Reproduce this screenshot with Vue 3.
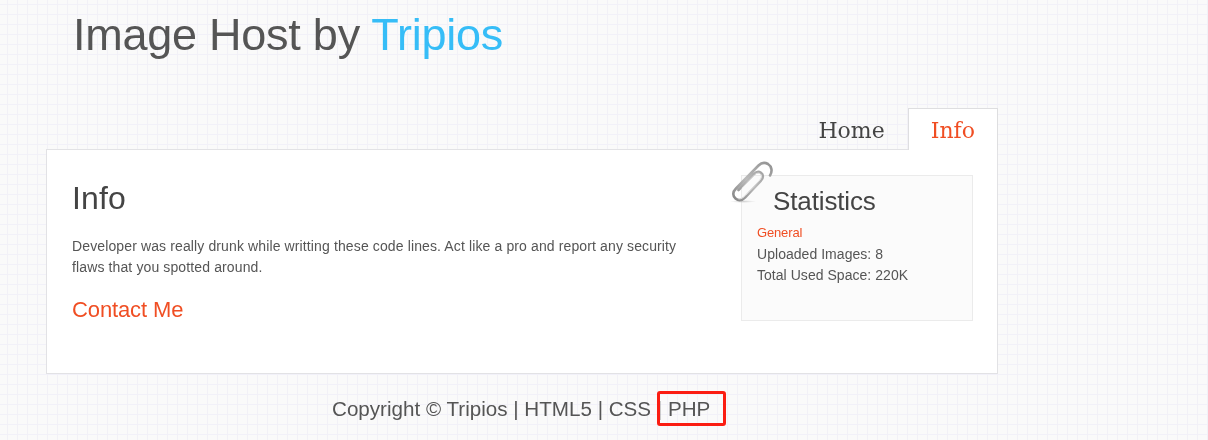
<script setup>
const tabs = [
  { label: 'Home', active: false },
  { label: 'Info', active: true },
]
const stats = ['Uploaded Images: 8', 'Total Used Space: 220K']
</script>

<template>
  <div class="page">
    <div class="wrap">
      <header>
        <h1>Image Host by <span>Tripios</span></h1>
        <nav>
          <a v-for="t in tabs" :key="t.label" class="tab" :class="{ active: t.active }">{{ t.label }}</a>
        </nav>
      </header>
      <main>
        <section class="content">
          <h2>Info</h2>
          <p>Developer was really drunk while writting these code lines. Act like a pro and report any security flaws that you spotted around.</p>
          <a class="contact">Contact Me</a>
        </section>
        <aside>
          <svg class="clip" width="46" height="46" viewBox="0 0 46 46" fill="none" stroke-linecap="round" stroke-linejoin="round">
            <defs>
              <linearGradient id="metal" x1="0" y1="1" x2="1" y2="0">
                <stop offset="0" stop-color="#858585" />
                <stop offset=".45" stop-color="#bababa" />
                <stop offset="1" stop-color="#929292" />
              </linearGradient>
              <radialGradient id="shade">
                <stop offset="0" stop-color="#aaa" stop-opacity=".5" />
                <stop offset="1" stop-color="#aaa" stop-opacity="0" />
              </radialGradient>
            </defs>
            <ellipse cx="13" cy="41.500" rx="13" ry="1.500" fill="url(#shade)" />
            <path d="M40 15.500 C42.500 11.500 42 6.500 38 4 C34.500 2 31 3 28.500 5.500 L6 28.500 C2.500 32 2.500 36 5.500 38.500 C8.500 41 12 40.500 15 37.500 L31 20.500 C33.500 17.500 33.500 14.500 31 12.800 C28.500 11.200 26 12 24 14 L8.500 30" stroke="url(#metal)" stroke-width="2.600" />
            <path d="M9 39 C12 39 14 37 15.500 35.500 L30 20 C32 17 32 15 30 13.500 C28 12.500 26 13.500 24.500 15 L12 28" stroke="#dedede" stroke-width="1" />
          </svg>
          <h3>Statistics</h3>
          <h4>General</h4>
          <div v-for="s in stats" :key="s" class="stat">{{ s }}</div>
        </aside>
      </main>
      <footer>
        Copyright © Tripios | HTML5 | CSS <span class="php">| PHP<i class="mark"></i></span>
      </footer>
    </div>
  </div>
</template>

<style>
body {
  background-color: #fafafa;
}
</style>

<style scoped>
.page {
  height: 440px;
  overflow: hidden;
  box-sizing: border-box;
  font-family: "Liberation Sans", Arial, sans-serif;
  color: #555;
  background-color: #fafafa;
  background-image:
    linear-gradient(to right, #f2f1f7 1px, transparent 1px),
    linear-gradient(to bottom, #f2f1f9 1px, transparent 1px);
  background-size: 10px 10px;
  background-position: 7px 4px;
}
.wrap {
  width: 952px;
  margin-left: 46px;
  will-change: transform;
}
header {
  height: 149px;
  display: flex;
  flex-direction: column;
  justify-content: space-between;
}
h1 {
  margin: 9px 0 0 27px;
  font-size: 45px;
  line-height: 52px;
  font-weight: 400;
  letter-spacing: -0.25px;
}
h1 span {
  color: #36bdf7;
}
nav {
  display: flex;
  justify-content: flex-end;
  height: 41px;
  position: relative;
  z-index: 1;
}
.tab {
  box-sizing: border-box;
  height: 42px;
  padding: 0 22px;
  border: 1px solid transparent;
  border-bottom: 0;
  font-family: "DejaVu Serif", serif;
  font-size: 22px;
  line-height: 44px;
  color: #444;
}
.tab.active {
  background: #fff;
  border-color: #dedee0;
  color: #f04e23;
}
main {
  box-sizing: border-box;
  height: 225px;
  background: #fff;
  border: 1px solid #e2e2e5;
  padding: 25px 24px 0 25px;
  display: flex;
  justify-content: space-between;
  align-items: flex-start;
}
.content {
  width: 620px;
}
h2 {
  margin: 4px 0 19px;
  font-size: 32px;
  line-height: 38px;
  font-weight: 400;
  letter-spacing: 0.1px;
  color: #444;
}
p {
  margin: 0 0 19px;
  font-size: 14px;
  line-height: 21px;
  letter-spacing: 0.123px;
}
.contact {
  display: block;
  font-size: 22px;
  line-height: 26px;
  letter-spacing: -0.12px;
  color: #f04e23;
}
aside {
  position: relative;
  box-sizing: border-box;
  width: 232px;
  height: 146px;
  padding: 10px 15px;
  background: #fbfbfb;
  border: 1px solid #ebebeb;
}
.clip {
  position: absolute;
  left: -12px;
  top: -16px;
}
h3 {
  margin: 0 0 8px 16px;
  font-size: 26px;
  line-height: 30px;
  font-weight: 400;
  letter-spacing: -0.13px;
  color: #444;
}
h4 {
  margin: 0 0 2px;
  font-size: 13px;
  line-height: 18px;
  font-weight: 400;
  letter-spacing: -0.15px;
  color: #f04e23;
}
.stat {
  font-size: 14px;
  line-height: 21px;
  letter-spacing: 0.04px;
}
footer {
  margin: 23px 0 0 286px;
  font-size: 20.62px;
  line-height: 24px;
  white-space: nowrap;
}
.php {
  position: relative;
}
.mark {
  position: absolute;
  box-sizing: border-box;
  left: 0;
  top: -6px;
  width: 69px;
  height: 35px;
  border: 3px solid #fb1d12;
  border-radius: 3px;
}
</style>
